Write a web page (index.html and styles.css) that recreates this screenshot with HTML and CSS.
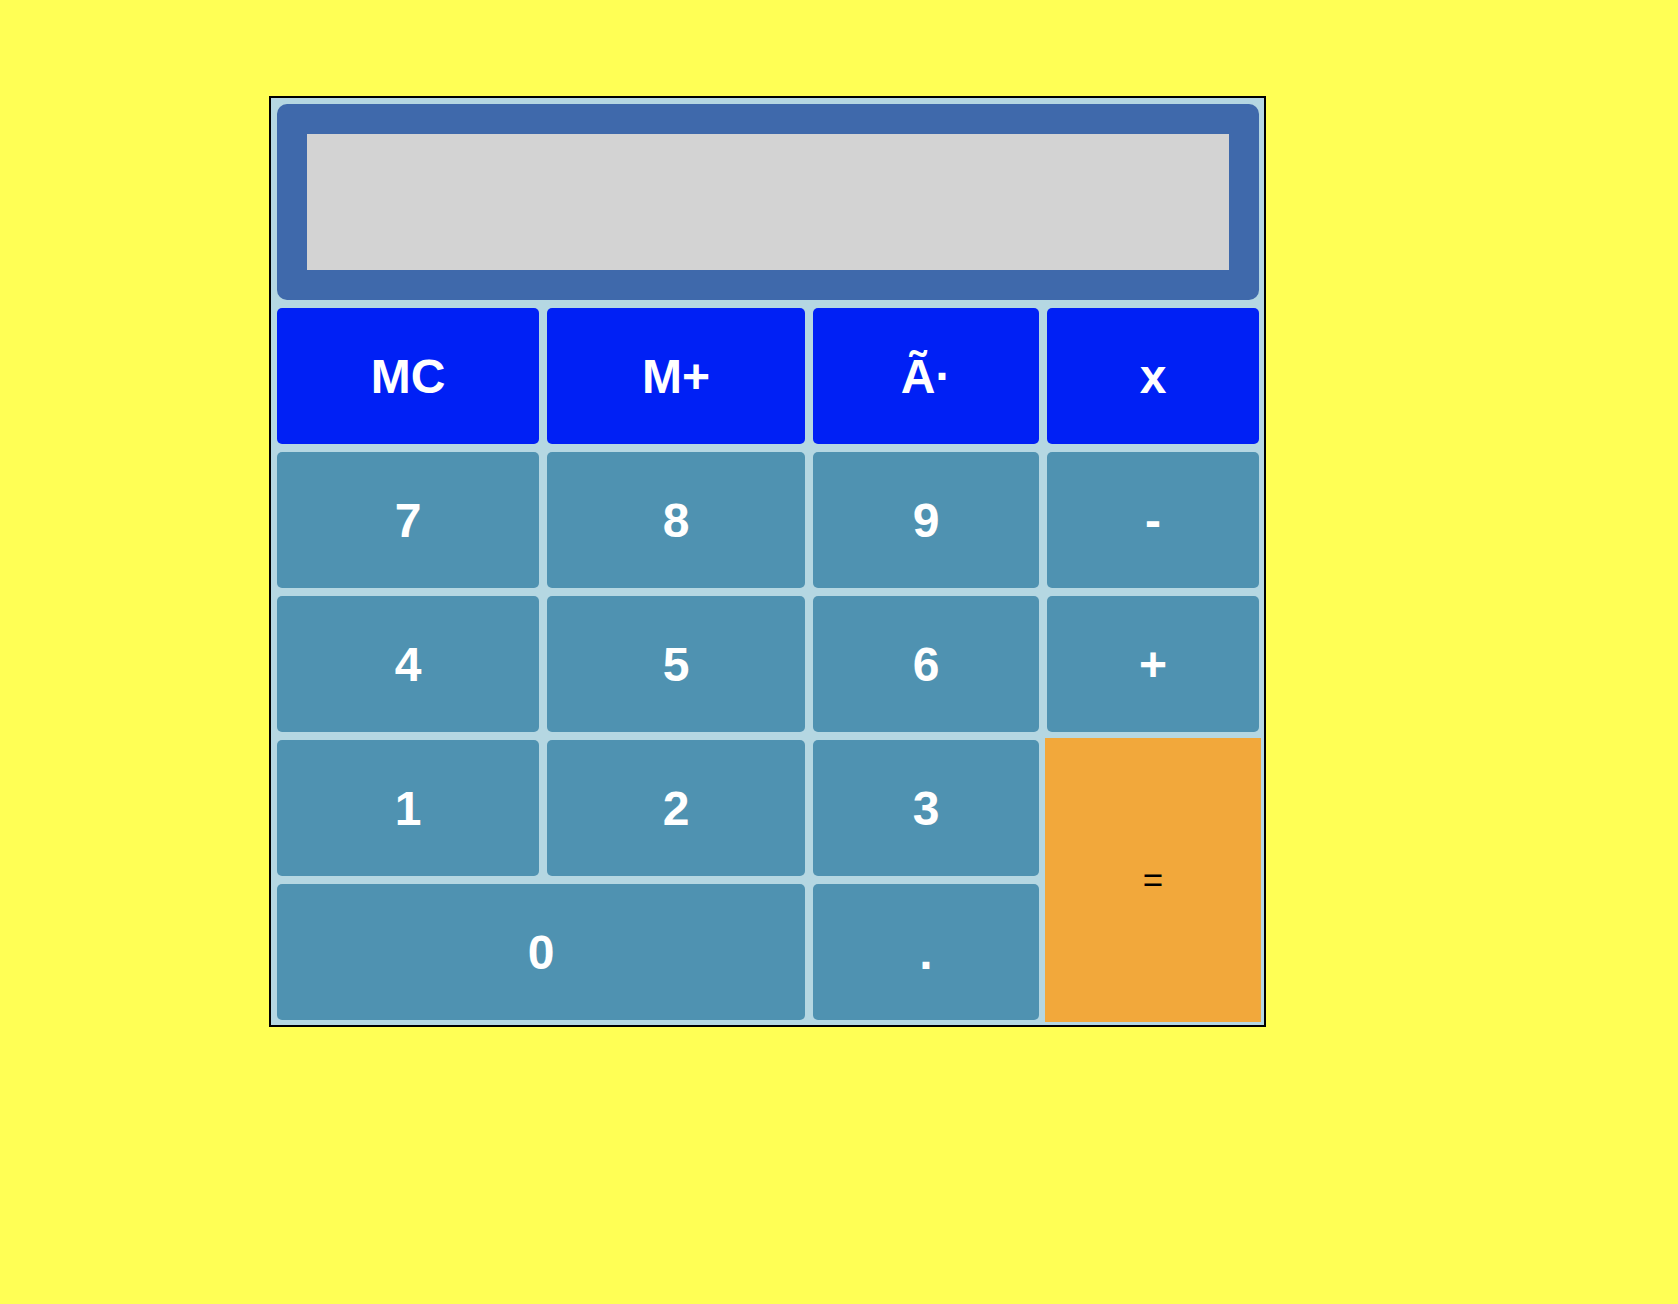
FILE: index.html
```html
<!DOCTYPE html>
<html>
<head>
<meta charset="utf-8">
<link rel="stylesheet" href="styles.css">
</head>
<body>
<div class="calc">
  <div class="display"><div class="screen"></div></div>
  <button class="key mem">MC</button>
  <button class="key mem">M+</button>
  <button class="key mem">Ã·</button>
  <button class="key mem">x</button>
  <button class="key">7</button>
  <button class="key">8</button>
  <button class="key">9</button>
  <button class="key">-</button>
  <button class="key">4</button>
  <button class="key">5</button>
  <button class="key">6</button>
  <button class="key">+</button>
  <button class="key">1</button>
  <button class="key">2</button>
  <button class="key">3</button>
  <button class="equals">=</button>
  <button class="key zero">0</button>
  <button class="key">.</button>
</div>
</body>
</html>
```

FILE: styles.css
```css
html, body {
  margin: 0;
  padding: 0;
}
body {
  background: #ffff55;
  min-height: 1304px;
  padding: 96px 0 0 269px;
  box-sizing: border-box;
  font-family: "Liberation Sans", Arial, sans-serif;
}
.calc {
  display: grid;
  width: 982px;
  grid-template-columns: 262px 258px 226px 212px;
  grid-template-rows: 196px repeat(5, 136px);
  gap: 8px;
  padding: 6px 5px 5px 6px;
  background: #b5d7e2;
  border: 2px solid #000;
}
.display {
  grid-column: 1 / 5;
  background: #3f69ab;
  border-radius: 10px;
  padding: 30px;
  display: flex;
}
.screen {
  flex: 1;
  background: #d3d3d3;
}
.key {
  border: none;
  margin: 0;
  padding: 0;
  border-radius: 5px;
  background: #4f92b1;
  color: #fff;
  font-family: "Liberation Sans", Arial, sans-serif;
  font-weight: bold;
  font-size: 48px;
}
.key.mem {
  background: #0020f5;
}
.zero {
  grid-column: 1 / 3;
}
.equals {
  grid-column: 4;
  grid-row: 5 / 7;
  margin: -2px;
  border: none;
  padding: 0;
  background: #f2a83b;
  color: #000;
  font-family: "Liberation Sans", Arial, sans-serif;
  font-size: 35px;
}
```
